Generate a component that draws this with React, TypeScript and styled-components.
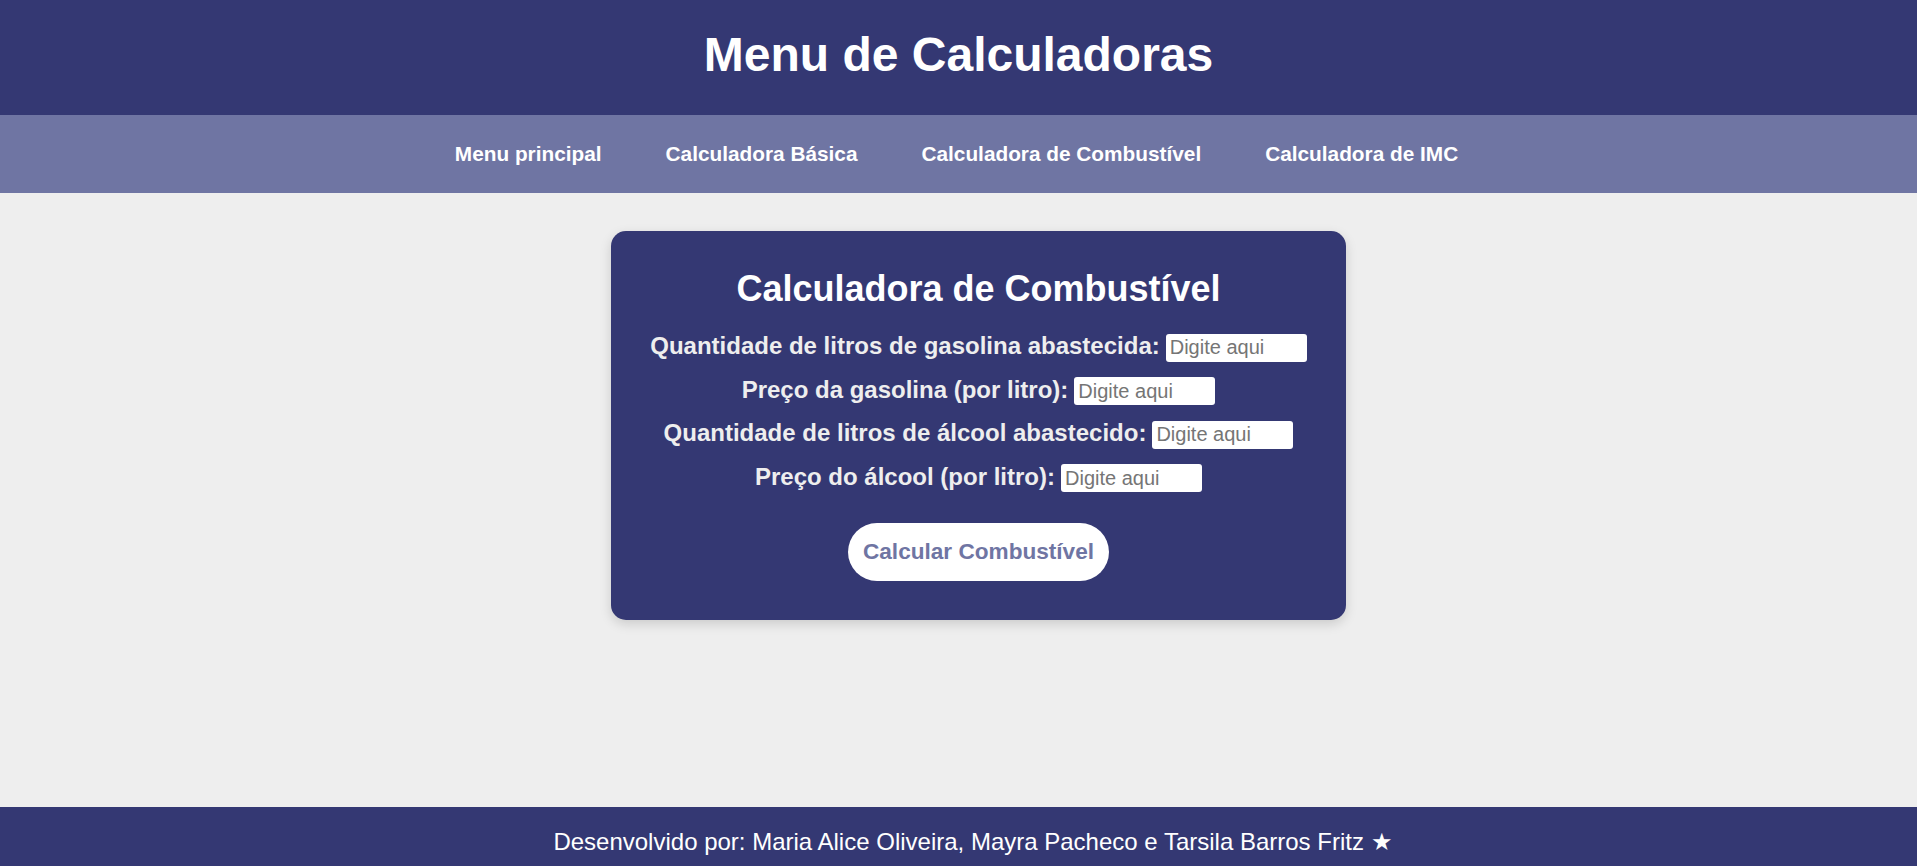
import React from "react";
import styled, { createGlobalStyle } from "styled-components";

const GlobalStyle = createGlobalStyle`
  html, body {
    margin: 0;
    padding: 0;
    height: 100%;
    overflow: hidden;
  }
  body {
    background: #eeeeee;
    font-family: "Liberation Sans", Arial, sans-serif;
  }
  #root {
    height: 100%;
  }
`;

const Page = styled.div`
  display: flex;
  flex-direction: column;
  height: 866px;
`;

const Header = styled.header`
  background: #343873;
  height: 115px;
  box-sizing: border-box;
  padding-top: 27px;
  text-align: center;
`;

const Title = styled.h1`
  margin: 0;
  color: #ffffff;
  font-size: 48px;
  font-weight: 700;
  line-height: 55px;
`;

const Nav = styled.nav`
  background: #6f75a3;
  height: 78px;
  box-sizing: border-box;
  padding-right: 4px;
  display: flex;
  align-items: center;
  justify-content: center;
  gap: 64px;
`;

const NavLink = styled.a`
  color: #ffffff;
  font-size: 20.8px;
  font-weight: 700;
  text-decoration: none;
  line-height: 24px;
  cursor: pointer;
`;

const Main = styled.main`
  flex: 1;
  padding: 38px 0 0 40px;
`;

const Card = styled.section`
  width: 735px;
  box-sizing: border-box;
  margin: 0 auto;
  background: #343873;
  border-radius: 15px;
  box-shadow: 0 4px 12px rgba(0, 0, 0, 0.15);
  padding: 37px 20px 39px;
  display: flex;
  flex-direction: column;
  align-items: center;
`;

const CardTitle = styled.h2`
  margin: 0 0 23px;
  color: #ffffff;
  font-size: 36px;
  font-weight: 700;
  line-height: 41px;
`;

const Row = styled.div<{ $last?: boolean }>`
  display: flex;
  align-items: baseline;
  justify-content: center;
  gap: 6px;
  margin-bottom: ${(p) => (p.$last ? "0" : "14px")};
`;

const Label = styled.label`
  color: #eeeeee;
  font-size: 24px;
  font-weight: 700;
  line-height: 28px;
`;

const Input = styled.input`
  width: 141px;
  height: 28px;
  box-sizing: border-box;
  border: none;
  border-radius: 3px;
  background: #ffffff;
  padding: 2px 4px;
  font-family: "Liberation Sans", Arial, sans-serif;
  font-size: 20px;
  color: #333333;
  outline: none;

  &::placeholder {
    color: #757575;
  }
`;

const Button = styled.button`
  margin-top: 31px;
  height: 58px;
  padding: 0 15px;
  border: none;
  border-radius: 29px;
  background: #ffffff;
  color: #6f75a3;
  font-family: "Liberation Sans", Arial, sans-serif;
  font-size: 22.6px;
  font-weight: 700;
  cursor: pointer;
`;

const Footer = styled.footer`
  background: #343873;
  height: 59px;
  box-sizing: border-box;
  padding: 21px 0 0 29px;
  overflow: hidden;
  text-align: center;
  color: #ffffff;
  font-size: 24px;
  line-height: 27px;
`;

const fields = [
  { id: "litrosGasolina", label: "Quantidade de litros de gasolina abastecida:" },
  { id: "precoGasolina", label: "Preço da gasolina (por litro):" },
  { id: "litrosAlcool", label: "Quantidade de litros de álcool abastecido:" },
  { id: "precoAlcool", label: "Preço do álcool (por litro):" },
];

const navItems = [
  "Menu principal",
  "Calculadora Básica",
  "Calculadora de Combustível",
  "Calculadora de IMC",
];

export default function App() {
  return (
    <>
      <GlobalStyle />
      <Page>
        <Header>
          <Title>Menu de Calculadoras</Title>
        </Header>
        <Nav>
          {navItems.map((n) => (
            <NavLink key={n}>{n}</NavLink>
          ))}
        </Nav>
        <Main>
          <Card>
            <CardTitle>Calculadora de Combustível</CardTitle>
            {fields.map((f, i) => (
              <Row key={f.id} $last={i === fields.length - 1}>
                <Label htmlFor={f.id}>{f.label}</Label>
                <Input id={f.id} type="text" placeholder="Digite aqui" />
              </Row>
            ))}
            <Button type="button">Calcular Combustível</Button>
          </Card>
        </Main>
        <Footer>
          Desenvolvido por: Maria Alice Oliveira, Mayra Pacheco e Tarsila Barros Fritz ★
        </Footer>
      </Page>
    </>
  );
}
